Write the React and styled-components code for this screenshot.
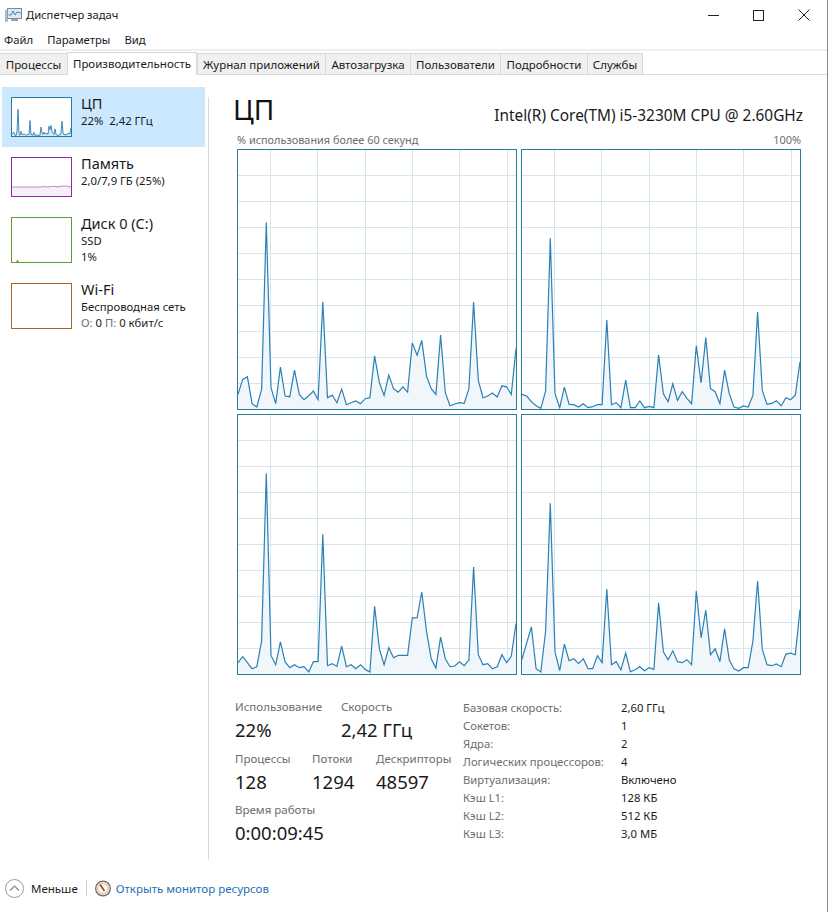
import React from 'react'
import styled, { createGlobalStyle } from 'styled-components'

const FONT = '"Noto Sans", "Open Sans", sans-serif'

const GlobalStyle = createGlobalStyle`
  html, body {
    margin: 0;
    padding: 0;
    background: #fff;
  }
  body {
    font-family: ${FONT};
    color: #1a1a1a;
  }
`

const Window = styled.div`
  width: 828px;
  height: 912px;
  box-sizing: border-box;
  border-right: 1px solid #8a8a8a;
  background: #fff;
  display: flex;
  flex-direction: column;
  overflow: hidden;
`

const TitleBar = styled.div`
  height: 30px;
  display: flex;
  align-items: center;
  padding: 0 1px 0 5px;
  font-size: 11.2px;
`

const TitleText = styled.span`
  margin-left: 4px;
  margin-top: -2px;
  flex: 1;
`

const WinButton = styled.div`
  width: 45px;
  height: 30px;
  display: flex;
  align-items: center;
  justify-content: center;
`

const MenuBar = styled.div`
  height: 19px;
  display: flex;
  align-items: center;
  padding-left: 4px;
  gap: 14px;
  font-size: 11.3px;
  border-bottom: 2px solid #f0f0f0;
`

const TabStrip = styled.div`
  height: 24px;
  display: flex;
  align-items: flex-end;
  box-sizing: border-box;
  border-bottom: 1px solid #d9d9d9;
`

const Tab = styled.div`
  width: ${p => p.$width}px;
  box-sizing: border-box;
  display: flex;
  align-items: center;
  justify-content: center;
  white-space: nowrap;
  font-size: 11.5px;
  height: ${p => (p.$active ? 23 : 21)}px;
  background: ${p => (p.$active ? '#fff' : '#f0f0f0')};
  border: 1px solid #d9d9d9;
  border-left-width: ${p => (p.$first ? 0 : 1)}px;
  border-right-width: ${p => (p.$active ? 1 : 0)}px;
  border-bottom: 0;
  margin-bottom: ${p => (p.$active ? -1 : 0)}px;
  padding-bottom: ${p => (p.$active ? 2 : 0)}px;
  &:last-child {
    border-right-width: 1px;
  }
`

const Body = styled.div`
  flex: 1;
  display: flex;
  padding-top: 12px;
`

const Sidebar = styled.div`
  width: 203px;
  margin-left: 2px;
  display: flex;
  flex-direction: column;
`

const Divider = styled.div`
  width: 1px;
  height: 763px;
  margin: 10px 0 0 3px;
  background: #d9d9d9;
`

const SideItem = styled.div`
  height: ${p => p.$height}px;
  box-sizing: border-box;
  padding: 10px 0 0 9px;
  display: flex;
  gap: 9px;
  background: ${p => (p.$active ? '#cce8ff' : 'transparent')};
`

const Thumb = styled.div`
  width: 61px;
  height: ${p => p.$height}px;
  box-sizing: border-box;
  border: 1px solid ${p => p.$color};
  background: #fff;
  flex-shrink: 0;
  & > svg {
    display: block;
    width: 100%;
    height: 100%;
  }
`

const SideText = styled.div`
  display: flex;
  flex-direction: column;
  margin-top: -4px;
`

const SideName = styled.div`
  font-size: 14.5px;
  line-height: 20px;
`

const SideLine = styled.div`
  font-size: 11.3px;
  line-height: 15.5px;
  white-space: nowrap;
`

const Muted = styled.span`
  color: #6d6d6d;
`

const Main = styled.div`
  margin-left: 24px;
  width: 570px;
  display: flex;
  flex-direction: column;
`

const Header = styled.div`
  display: flex;
  align-items: flex-end;
  justify-content: space-between;
  height: 40px;
  margin-top: 3px;
`

const Heading = styled.div`
  font-size: 28px;
  line-height: 38px;
  margin-bottom: 2px;
  color: #111;
`

const CpuName = styled.div`
  font-size: 15.4px;
  line-height: 20px;
  margin-bottom: 4px;
  white-space: nowrap;
`

const AxisRow = styled.div`
  display: flex;
  justify-content: space-between;
  padding: 0 2px 0 4px;
  height: 19px;
  align-items: center;
  font-size: 10.9px;
  color: #6d6d6d;
`

const GraphGrid = styled.div`
  margin-left: 4px;
  display: grid;
  grid-template-columns: 280px 280px;
  grid-template-rows: 261px 261px;
  gap: 4px;
`

const Graph = styled.div`
  box-sizing: border-box;
  border: 1px solid #2a7a9e;
  & > svg {
    display: block;
    width: 100%;
    height: 100%;
  }
`

const Details = styled.div`
  display: flex;
  margin-top: 24px;
`

const Stats = styled.div`
  width: 228px;
  margin-left: 2px;
  display: flex;
  flex-direction: column;
`

const StatRow = styled.div`
  display: flex;
  height: 51.5px;
`

const Stat = styled.div`
  width: ${p => p.$width}px;
  white-space: nowrap;
`

const StatLabel = styled.div`
  font-size: 11.5px;
  line-height: 16px;
  color: #6d6d6d;
`

const StatValue = styled.div`
  font-size: 18.5px;
  line-height: 29px;
  color: #1a1a1a;
`

const Specs = styled.div`
  display: grid;
  grid-template-columns: 158px auto;
  grid-auto-rows: 18px;
  align-items: center;
  align-content: start;
  margin-top: -1px;
  font-size: 11.3px;
  white-space: nowrap;
  justify-content: start;
`

const SpecValue = styled.div`
  color: #1a1a1a;
`

const Footer = styled.div`
  height: 30px;
  margin-bottom: 9px;
  display: flex;
  align-items: center;
  padding-left: 5px;
  font-size: 11.5px;
`

const FooterLabel = styled.span`
  margin-left: 7px;
`

const FooterRule = styled.div`
  width: 1px;
  height: 16px;
  margin: 0 8px 0 8px;
  background: #d0d0d0;
`

const MonitorLink = styled.span`
  margin-left: 5px;
  color: #1f6fb4;
`

const TABS = [
  { label: 'Процессы', width: 67 },
  { label: 'Производительность', width: 130, active: true },
  { label: 'Журнал приложений', width: 128 },
  { label: 'Автозагрузка', width: 85 },
  { label: 'Пользователи', width: 90 },
  { label: 'Подробности', width: 87 },
  { label: 'Службы', width: 56 },
]

// y of each sample, read off the reference at 3x, frame top 14 and bottom 794
const CORES = [
  [750, 705, 697, 778, 788, 735, 232, 730, 778, 668, 755, 757, 677, 750, 766, 754, 740, 766, 472, 760, 752, 775, 734, 781, 775, 770, 778, 763, 760, 634, 715, 753, 692, 733, 743, 727, 743, 595, 632, 587, 695, 733, 750, 571, 745, 784, 779, 775, 777, 733, 472, 708, 760, 755, 746, 758, 724, 727, 750, 612],
  [750, 755, 772, 784, 792, 740, 280, 748, 790, 728, 780, 781, 788, 778, 790, 787, 781, 781, 526, 781, 775, 790, 707, 790, 790, 770, 790, 786, 790, 631, 748, 772, 718, 768, 742, 762, 778, 604, 715, 579, 733, 742, 778, 677, 748, 788, 792, 785, 788, 753, 502, 738, 780, 777, 769, 784, 760, 766, 752, 652],
  [760, 742, 760, 778, 772, 695, 190, 738, 766, 697, 758, 775, 766, 775, 772, 788, 757, 757, 373, 769, 763, 771, 710, 772, 766, 778, 766, 780, 788, 590, 718, 766, 715, 745, 738, 738, 738, 625, 625, 547, 665, 748, 776, 683, 748, 772, 770, 757, 769, 752, 472, 736, 766, 763, 778, 772, 736, 760, 740, 642],
  [750, 700, 652, 778, 788, 665, 280, 727, 784, 704, 754, 748, 763, 748, 778, 778, 739, 760, 538, 766, 757, 781, 731, 787, 781, 772, 784, 775, 780, 580, 727, 751, 724, 757, 760, 751, 766, 544, 685, 602, 736, 718, 757, 658, 752, 778, 785, 775, 775, 695, 514, 720, 766, 769, 764, 772, 734, 731, 736, 600],
]

const V_LINES = [33, 80, 128, 175, 222, 270]
const H_LINES = [26, 52, 78, 104, 130, 156, 182, 208, 234]

function linePoints (samples, width, height) {
  return samples
    .map((y, i) => {
      const px = (i * width) / (samples.length - 1)
      const py = ((y - 14) / 780) * height
      return `${px.toFixed(1)},${py.toFixed(1)}`
    })
    .join(' ')
}

function CoreGraph ({ samples }) {
  const line = linePoints(samples, 278, 259)
  return (
    <Graph>
      <svg viewBox='0 0 278 259' preserveAspectRatio='none'>
        {V_LINES.map(x => (
          <line key={x} x1={x - 0.5} x2={x - 0.5} y1='0' y2='259' stroke='#d5e5f0' />
        ))}
        {H_LINES.map(y => (
          <line key={y} x1='0' x2='278' y1={y - 0.5} y2={y - 0.5} stroke='#d5e5f0' />
        ))}
        <polygon points={`0,259 ${line} 278,259`} fill='#f1f6fa' />
        <polyline points={line} fill='none' stroke='#2b80b4' strokeWidth='1.2' />
      </svg>
    </Graph>
  )
}

function CpuThumb () {
  const samples = CORES[0].map((_, i) => {
    const avg = CORES.reduce((sum, core) => sum + (794 - core[i]), 0) / 4
    return 794 - avg
  })
  const line = linePoints(samples, 59, 38)
  return (
    <Thumb $color='#2a7a9e' $height={40}>
      <svg viewBox='0 0 59 38' preserveAspectRatio='none'>
        <polygon points={`0,38 ${line} 59,38`} fill='#d6e8f3' />
        <polyline points={line} fill='none' stroke='#2b80b4' strokeWidth='0.9' />
      </svg>
    </Thumb>
  )
}

function MemoryThumb () {
  const line = '0,29 28,29 31,28.6 36,29 41,28.2 46,28.8 51,28 56,28.3 59,29'
  return (
    <Thumb $color='#8b2d9e' $height={40}>
      <svg viewBox='0 0 59 38' preserveAspectRatio='none'>
        <polygon points={`0,38 ${line} 59,38`} fill='#f6eff8' />
        <polyline points={line} fill='none' stroke='#a05db2' strokeWidth='0.7' />
      </svg>
    </Thumb>
  )
}

function DiskThumb () {
  return (
    <Thumb $color='#5f9e2c' $height={46}>
      <svg viewBox='0 0 59 44' preserveAspectRatio='none'>
        <polygon points='4,44 5.5,41.5 7,44' fill='#6aa83a' />
      </svg>
    </Thumb>
  )
}

function AppIcon () {
  return (
    <svg width='17' height='16' viewBox='0 0 17 16'>
      <rect x='2.5' y='1.5' width='14' height='10' fill='#dce9f3' stroke='#7b8a96' />
      <polyline points='3.5,8 6,8 8,4 10,8 12,5 15.5,6' fill='none' stroke='#3b82b5' strokeWidth='1' />
      <rect x='6' y='12' width='7' height='2' fill='#9aa5ad' />
      <rect x='0.5' y='3.5' width='2' height='11' fill='#b9c2c8' stroke='#8a949b' strokeWidth='0.6' />
    </svg>
  )
}

function LessIcon () {
  return (
    <svg width='19' height='19' viewBox='0 0 19 19'>
      <circle cx='9.5' cy='9.5' r='9' fill='#fff' stroke='#9a9a9a' />
      <polyline points='5,11.5 9.5,7 14,11.5' fill='none' stroke='#8a8a8a' strokeWidth='1.2' />
    </svg>
  )
}

function MonitorIcon () {
  return (
    <svg width='16' height='17' viewBox='0 0 16 17'>
      <circle cx='8' cy='8.5' r='7.4' fill='#e8e2d4' stroke='#6f6a62' strokeWidth='1.2' />
      <circle cx='8' cy='8.5' r='5' fill='#fbf8f0' stroke='#b5ad9c' strokeWidth='0.6' />
      <line x1='5' y1='4.5' x2='9.5' y2='11' stroke='#c0272d' strokeWidth='1.5' />
    </svg>
  )
}

export default function App () {
  return (
    <Window>
      <GlobalStyle />
      <TitleBar>
        <AppIcon />
        <TitleText>Диспетчер задач</TitleText>
        <WinButton>
          <svg width='11' height='11' viewBox='0 0 11 11'>
            <line x1='0' x2='11' y1='5.5' y2='5.5' stroke='#222' />
          </svg>
        </WinButton>
        <WinButton>
          <svg width='11' height='11' viewBox='0 0 11 11'>
            <rect x='0.5' y='0.5' width='10' height='10' fill='none' stroke='#222' />
          </svg>
        </WinButton>
        <WinButton>
          <svg width='12' height='12' viewBox='0 0 12 12'>
            <path d='M0.5 0.5 L11.5 11.5 M11.5 0.5 L0.5 11.5' stroke='#222' fill='none' />
          </svg>
        </WinButton>
      </TitleBar>
      <MenuBar>
        <span>Файл</span>
        <span>Параметры</span>
        <span>Вид</span>
      </MenuBar>
      <TabStrip>
        {TABS.map((tab, i) => (
          <Tab key={tab.label} $width={tab.width} $active={tab.active} $first={i === 0}>
            {tab.label}
          </Tab>
        ))}
      </TabStrip>
      <Body>
        <Sidebar>
          <SideItem $active $height={60}>
            <CpuThumb />
            <SideText>
              <SideName>ЦП</SideName>
              <SideLine>22%&nbsp; 2,42 ГГц</SideLine>
            </SideText>
          </SideItem>
          <SideItem $height={60}>
            <MemoryThumb />
            <SideText>
              <SideName>Память</SideName>
              <SideLine>2,0/7,9 ГБ (25%)</SideLine>
            </SideText>
          </SideItem>
          <SideItem $height={66}>
            <DiskThumb />
            <SideText>
              <SideName>Диск 0 (C:)</SideName>
              <SideLine>SSD</SideLine>
              <SideLine>1%</SideLine>
            </SideText>
          </SideItem>
          <SideItem $height={66}>
            <Thumb $color='#a5662b' $height={46} />
            <SideText>
              <SideName>Wi-Fi</SideName>
              <SideLine>Беспроводная сеть</SideLine>
              <SideLine><Muted>О:</Muted> 0 <Muted>П:</Muted> 0 кбит/с</SideLine>
            </SideText>
          </SideItem>
        </Sidebar>
        <Divider />
        <Main>
          <Header>
            <Heading>ЦП</Heading>
            <CpuName>Intel(R) Core(TM) i5-3230M CPU @ 2.60GHz</CpuName>
          </Header>
          <AxisRow>
            <span>% использования более 60 секунд</span>
            <span>100%</span>
          </AxisRow>
          <GraphGrid>
            {CORES.map((samples, i) => (
              <CoreGraph key={i} samples={samples} />
            ))}
          </GraphGrid>
          <Details>
            <Stats>
              <StatRow>
                <Stat $width={106}>
                  <StatLabel>Использование</StatLabel>
                  <StatValue>22%</StatValue>
                </Stat>
                <Stat $width={110}>
                  <StatLabel>Скорость</StatLabel>
                  <StatValue>2,42 ГГц</StatValue>
                </Stat>
              </StatRow>
              <StatRow>
                <Stat $width={77}>
                  <StatLabel>Процессы</StatLabel>
                  <StatValue>128</StatValue>
                </Stat>
                <Stat $width={64}>
                  <StatLabel>Потоки</StatLabel>
                  <StatValue>1294</StatValue>
                </Stat>
                <Stat $width={80}>
                  <StatLabel>Дескрипторы</StatLabel>
                  <StatValue>48597</StatValue>
                </Stat>
              </StatRow>
              <StatRow>
                <Stat $width={120}>
                  <StatLabel>Время работы</StatLabel>
                  <StatValue>0:00:09:45</StatValue>
                </Stat>
              </StatRow>
            </Stats>
            <Specs>
              <Muted>Базовая скорость:</Muted><SpecValue>2,60 ГГц</SpecValue>
              <Muted>Сокетов:</Muted><SpecValue>1</SpecValue>
              <Muted>Ядра:</Muted><SpecValue>2</SpecValue>
              <Muted>Логических процессоров:</Muted><SpecValue>4</SpecValue>
              <Muted>Виртуализация:</Muted><SpecValue>Включено</SpecValue>
              <Muted>Кэш L1:</Muted><SpecValue>128 КБ</SpecValue>
              <Muted>Кэш L2:</Muted><SpecValue>512 КБ</SpecValue>
              <Muted>Кэш L3:</Muted><SpecValue>3,0 МБ</SpecValue>
            </Specs>
          </Details>
        </Main>
      </Body>
      <Footer>
        <LessIcon />
        <FooterLabel>Меньше</FooterLabel>
        <FooterRule />
        <MonitorIcon />
        <MonitorLink>Открыть монитор ресурсов</MonitorLink>
      </Footer>
    </Window>
  )
}
